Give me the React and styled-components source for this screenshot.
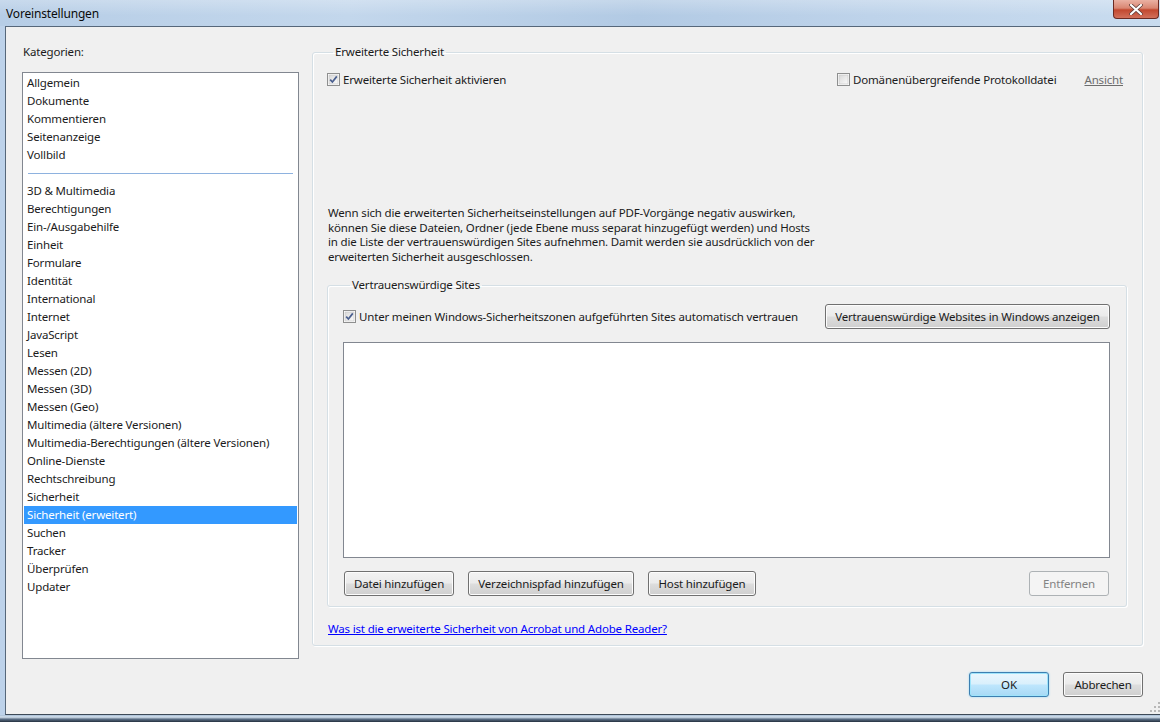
import React from 'react';
import styled, { createGlobalStyle } from 'styled-components';

const GlobalStyle = createGlobalStyle`
  html, body {
    margin: 0;
    padding: 0;
    background: #1d2a38;
  }
  body {
    font-family: "Noto Sans", "Open Sans", sans-serif;
    font-size: 11.5px;
    letter-spacing: -0.17px;
    color: #1b1b1b;
  }
`;

const Window = styled.div`
  width: 1160px;
  height: 722px;
  display: flex;
  flex-direction: column;
  background: linear-gradient(90deg, #bdd2ea 0%, #c6d8ed 40%, #b7cee8 100%);
  overflow: hidden;
  position: relative;
`;

const TitleBar = styled.div`
  height: 26px;
  flex: none;
  display: flex;
  align-items: center;
  justify-content: space-between;
  padding-left: 6px;
  background:
    linear-gradient(180deg, rgba(255,255,255,0.25) 0%, rgba(255,255,255,0) 60%),
    linear-gradient(90deg, #b6cde6 0%, #c3d7ec 30%, #b2cae4 55%, #bed3ea 75%, #c9dcef 100%);
`;

const Title = styled.span`
  font-size: 12px;
  color: #0b0b0b;
`;

const CloseButton = styled.div`
  align-self: flex-start;
  width: 44px;
  height: 18px;
  margin-right: 1px;
  border: 1px solid #6b2a22;
  border-top: none;
  border-radius: 0 0 4px 4px;
  background: linear-gradient(180deg, #eab1a3 0%, #d98672 45%, #c2482f 55%, #d2705b 100%);
  display: flex;
  align-items: center;
  justify-content: center;
`;

const FrameRow = styled.div`
  flex: 1;
  display: flex;
  padding-left: 5px;
  min-height: 0;
`;

const Client = styled.div`
  flex: 1;
  display: flex;
  flex-direction: column;
  background: #f0f0f0;
  border-top: 1px solid #56677a;
  border-left: 1px solid #56677a;
  border-bottom: 1px solid #3e4a57;
  padding: 17px 19px 0 16px;
  position: relative;
`;

const BottomFrame = styled.div`
  height: 7px;
  flex: none;
  background: linear-gradient(180deg, #a9bfd6 0%, #d4e1ee 30%, #5b6f86 60%, #24303e 100%);
`;

const MainRow = styled.div`
  display: flex;
  gap: 13px;
`;

const Sidebar = styled.div`
  width: 277px;
  display: flex;
  flex-direction: column;
`;

const Label = styled.div`
  line-height: 16px;
  padding-left: 1px;
`;

const ListBox = styled.div`
  margin-top: 12px;
  height: 584px;
  background: #fff;
  border: 1px solid #828790;
  padding: 1px 0 0;
`;

const ListItem = styled.div`
  height: 18px;
  line-height: 18px;
  padding-left: 3px;
  margin: 0 1px;
  white-space: nowrap;
  background: ${(p) => (p.$selected ? '#3399ff' : 'transparent')};
  color: ${(p) => (p.$selected ? '#fff' : '#1b1b1b')};
`;

const Separator = styled.div`
  height: 18px;
  display: flex;
  align-items: center;
  padding: 0 5px;
  &::after {
    content: '';
    flex: 1;
    height: 1px;
    background: #8eb2df;
  }
`;

const Group = styled.fieldset`
  margin: 0;
  min-width: 0;
  padding: 0 ${(p) => p.$padRight}px ${(p) => p.$padBottom}px ${(p) => p.$padLeft}px;
  border: 1px solid #d5dfe5;
  border-radius: 3px;
  box-shadow: inset 1px 1px 0 #fff, 1px 1px 0 #fff;
  height: ${(p) => p.$height}px;
  box-sizing: border-box;
  display: flex;
  flex-direction: column;
`;

const Legend = styled.legend`
  padding: 0 2px;
  margin-left: ${(p) => p.$offset}px;
  line-height: 16px;
`;

const OuterGroup = styled(Group)`
  width: 831px;
`;

const TopRow = styled.div`
  margin-top: 12px;
  display: flex;
  justify-content: space-between;
  align-items: center;
  height: 16px;
  padding-right: 5px;
`;

const RightTools = styled.div`
  display: flex;
  align-items: center;
  gap: 28px;
`;

const CheckRow = styled.label`
  display: flex;
  align-items: center;
  gap: 3px;
  white-space: nowrap;
`;

const BoxSvg = styled.svg`
  flex: none;
  display: block;
`;

const ViewLink = styled.span`
  color: #6d6d6d;
  text-decoration: underline;
`;

const Paragraph = styled.p`
  margin: 118px 0 0 1px;
  line-height: 14.8px;
  white-space: nowrap;
`;

const InnerGroup = styled(Group)`
  margin-top: 12px;
  margin-right: 1px;
`;

const SitesRow = styled.div`
  margin-top: 11px;
  height: 25px;
  display: flex;
  align-items: center;
  justify-content: space-between;
`;

const SiteList = styled.div`
  margin-top: 13px;
  height: 214px;
  background: #fff;
  border: 1px solid #828790;
`;

const ButtonRow = styled.div`
  margin-top: 13px;
  display: flex;
  gap: 14px;
  padding: 0 1px;
`;

const Button = styled.button`
  font: inherit;
  letter-spacing: inherit;
  color: ${(p) => (p.disabled ? '#838383' : '#1b1b1b')};
  height: 25px;
  width: ${(p) => p.$w}px;
  padding: 0;
  margin-left: ${(p) => (p.$push ? 'auto' : '0')};
  border: 1px solid ${(p) => (p.disabled ? '#adb2b5' : '#707070')};
  border-radius: 3px;
  box-shadow: inset 0 0 0 1px ${(p) => (p.disabled ? '#f4f4f4' : '#fcfcfc')};
  background: ${(p) =>
    p.disabled
      ? '#f4f4f4'
      : 'linear-gradient(180deg, #f2f2f2 0%, #ebebeb 48%, #dddddd 52%, #cfcfcf 100%)'};
`;

const DefaultButton = styled(Button)`
  border-color: #3c7fb1;
  box-shadow: inset 0 0 0 1px #9ee4fb, 0 0 2px #86d3f5;
  background: linear-gradient(180deg, #eaf6fd 0%, #d9f0fc 48%, #bee6fd 52%, #a7d9f5 100%);
`;

const HelpLink = styled.a`
  margin: 14px 0 0 1px;
  line-height: 16px;
  color: #0000ff;
  text-decoration: underline;
  align-self: flex-start;
`;

const Footer = styled.div`
  margin-top: 13px;
  display: flex;
  justify-content: flex-end;
  gap: 14px;
`;

const Grip = styled.svg`
  position: absolute;
  right: 2px;
  bottom: 2px;
`;

function CheckBox({ checked }) {
  return (
    <BoxSvg width="13" height="13" viewBox="0 0 13 13">
      <defs>
        <linearGradient id="cbg" x1="0" y1="0" x2="1" y2="1">
          <stop offset="0" stopColor="#d8d8d8" />
          <stop offset="1" stopColor="#fbfbfb" />
        </linearGradient>
      </defs>
      <rect x="0.5" y="0.5" width="12" height="12" fill="#fff" stroke="#8e8f8f" />
      <rect x="2" y="2" width="9" height="9" fill="url(#cbg)" stroke="#c4c4c4" strokeWidth="0.6" />
      {checked && (
        <path d="M3.2 6.6 L5.4 9 L9.8 3.4" fill="none" stroke="#4a5f8f" strokeWidth="1.7" />
      )}
    </BoxSvg>
  );
}

const groupOne = ['Allgemein', 'Dokumente', 'Kommentieren', 'Seitenanzeige', 'Vollbild'];
const groupTwo = [
  '3D & Multimedia',
  'Berechtigungen',
  'Ein-/Ausgabehilfe',
  'Einheit',
  'Formulare',
  'Identität',
  'International',
  'Internet',
  'JavaScript',
  'Lesen',
  'Messen (2D)',
  'Messen (3D)',
  'Messen (Geo)',
  'Multimedia (ältere Versionen)',
  'Multimedia-Berechtigungen (ältere Versionen)',
  'Online-Dienste',
  'Rechtschreibung',
  'Sicherheit',
  'Sicherheit (erweitert)',
  'Suchen',
  'Tracker',
  'Überprüfen',
  'Updater',
];

export default function App() {
  return (
    <>
      <GlobalStyle />
      <Window>
        <TitleBar>
          <Title>Voreinstellungen</Title>
          <CloseButton>
            <svg width="14" height="11" viewBox="0 0 14 11">
              <path d="M2 1 L12 10 M12 1 L2 10" stroke="#5a3a36" strokeWidth="3.6" strokeLinecap="round" />
              <path d="M2 1 L12 10 M12 1 L2 10" stroke="#fff" strokeWidth="2.2" strokeLinecap="round" />
            </svg>
          </CloseButton>
        </TitleBar>
        <FrameRow>
          <Client>
            <MainRow>
              <Sidebar>
                <Label>Kategorien:</Label>
                <ListBox>
                  {groupOne.map((c) => (
                    <ListItem key={c}>{c}</ListItem>
                  ))}
                  <Separator />
                  {groupTwo.map((c) => (
                    <ListItem key={c} $selected={c === 'Sicherheit (erweitert)'}>
                      {c}
                    </ListItem>
                  ))}
                </ListBox>
              </Sidebar>

              <OuterGroup $height={602} $padLeft={14} $padRight={14} $padBottom={8}>
                <Legend $offset={6}>Erweiterte Sicherheit</Legend>
                <TopRow>
                  <CheckRow>
                    <CheckBox checked />
                    Erweiterte Sicherheit aktivieren
                  </CheckRow>
                  <RightTools>
                    <CheckRow>
                      <CheckBox />
                      Domänenübergreifende Protokolldatei
                    </CheckRow>
                    <ViewLink>Ansicht</ViewLink>
                  </RightTools>
                </TopRow>

                <Paragraph>
                  Wenn sich die erweiterten Sicherheitseinstellungen auf PDF-Vorgänge negativ auswirken,
                  <br />
                  können Sie diese Dateien, Ordner (jede Ebene muss separat hinzugefügt werden) und Hosts
                  <br />
                  in die Liste der vertrauenswürdigen Sites aufnehmen. Damit werden sie ausdrücklich von der
                  <br />
                  erweiterten Sicherheit ausgeschlossen.
                </Paragraph>

                <InnerGroup $height={330} $padLeft={15} $padRight={16} $padBottom={10}>
                  <Legend $offset={7}>Vertrauenswürdige Sites</Legend>
                  <SitesRow>
                    <CheckRow>
                      <CheckBox checked />
                      Unter meinen Windows-Sicherheitszonen aufgeführten Sites automatisch vertrauen
                    </CheckRow>
                    <Button $w={285}>Vertrauenswürdige Websites in Windows anzeigen</Button>
                  </SitesRow>
                  <SiteList />
                  <ButtonRow>
                    <Button $w={110}>Datei hinzufügen</Button>
                    <Button $w={166}>Verzeichnispfad hinzufügen</Button>
                    <Button $w={108}>Host hinzufügen</Button>
                    <Button $w={80} $push disabled>
                      Entfernen
                    </Button>
                  </ButtonRow>
                </InnerGroup>

                <HelpLink href="#">Was ist die erweiterte Sicherheit von Acrobat und Adobe Reader?</HelpLink>
              </OuterGroup>
            </MainRow>

            <Footer>
              <DefaultButton $w={80}>OK</DefaultButton>
              <Button $w={80}>Abbrechen</Button>
            </Footer>

            <Grip width="11" height="11" viewBox="0 0 11 11">
              {[
                [9, 1], [9, 5], [5, 5], [9, 9], [5, 9], [1, 9],
              ].map(([x, y]) => (
                <rect key={`${x}-${y}`} x={x} y={y} width="2" height="2" fill="#b8b8b8" />
              ))}
            </Grip>
          </Client>
        </FrameRow>
        <BottomFrame />
      </Window>
    </>
  );
}
